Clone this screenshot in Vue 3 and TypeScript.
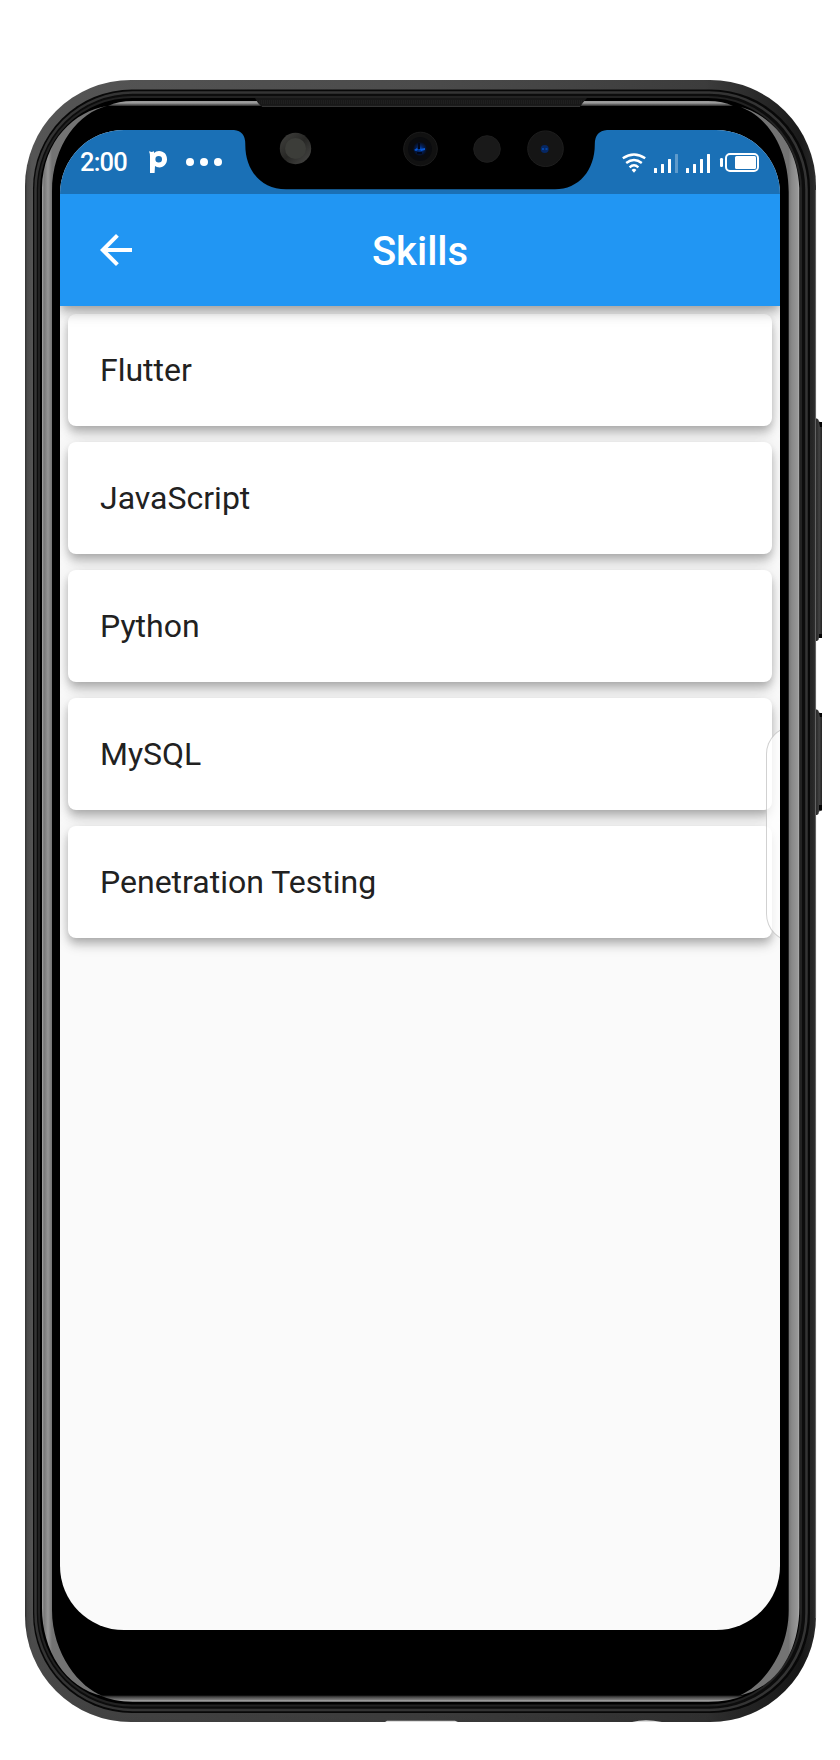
<script setup lang="ts">
interface Skill {
  id: number
  name: string
}

const skills: Skill[] = [
  { id: 1, name: 'Flutter' },
  { id: 2, name: 'JavaScript' },
  { id: 3, name: 'Python' },
  { id: 4, name: 'MySQL' },
  { id: 5, name: 'Penetration Testing' },
]
</script>

<template>
  <div class="stage">
    <svg class="body" width="840" height="1760" viewBox="0 0 840 1760" aria-hidden="true">
      <defs>
        <linearGradient id="shell" x1="25" x2="816" y1="0" y2="0" gradientUnits="userSpaceOnUse">
          <stop offset="0" stop-color="#333" />
          <stop offset="0.003" stop-color="#4b4b4b" />
          <stop offset="0.009" stop-color="#555" />
          <stop offset="0.5" stop-color="#4b4b4b" />
          <stop offset="0.86" stop-color="#3c3c3c" />
          <stop offset="0.98" stop-color="#1a1a1a" />
          <stop offset="0.996" stop-color="#272727" />
          <stop offset="1" stop-color="#333" />
        </linearGradient>
        <linearGradient id="shade" x1="0" x2="0" y1="80" y2="1722" gradientUnits="userSpaceOnUse">
          <stop offset="0.9" stop-color="#000" stop-opacity="0" />
          <stop offset="1" stop-color="#000" stop-opacity="0.22" />
        </linearGradient>
        <linearGradient id="glintL" x1="42" x2="52" y1="0" y2="0" gradientUnits="userSpaceOnUse">
          <stop offset="0" stop-color="#a8a8a8" />
          <stop offset="0.2" stop-color="#777" />
          <stop offset="0.6" stop-color="#969696" />
          <stop offset="1" stop-color="#737373" />
        </linearGradient>
        <linearGradient id="glintR" x1="788.5" x2="799.5" y1="0" y2="0" gradientUnits="userSpaceOnUse">
          <stop offset="0" stop-color="#737373" />
          <stop offset="0.3" stop-color="#888" />
          <stop offset="0.85" stop-color="#999" />
          <stop offset="1" stop-color="#bbb" />
        </linearGradient>
        <linearGradient id="edgeTop" x1="0" x2="0" y1="100" y2="107" gradientUnits="userSpaceOnUse">
          <stop offset="0" stop-color="#333" />
          <stop offset="0.25" stop-color="#aaa" />
          <stop offset="0.5" stop-color="#888" />
          <stop offset="0.75" stop-color="#444" />
          <stop offset="1" stop-color="#111" />
        </linearGradient>
        <linearGradient id="edgeBottom" x1="0" x2="0" y1="1695" y2="1702" gradientUnits="userSpaceOnUse">
          <stop offset="0" stop-color="#111" />
          <stop offset="0.4" stop-color="#555" />
          <stop offset="0.65" stop-color="#777" />
          <stop offset="0.85" stop-color="#aaa" />
          <stop offset="1" stop-color="#444" />
        </linearGradient>
        <linearGradient id="button" x1="815" x2="822" y1="0" y2="0" gradientUnits="userSpaceOnUse">
          <stop offset="0" stop-color="#191919" />
          <stop offset="0.6" stop-color="#444" />
          <stop offset="1" stop-color="#222" />
        </linearGradient>
      </defs>

      <path d="M815 418.500h2q2 1 2 3l3 1v214l-3 1q0 3-2 3.500h-2zM815 709.500h2q2 1 2 3l3 1v97l-3 1q0 3-2 3.500h-2z" fill="url(#button)" />
      <path d="M819 422h3v5h-2zM819 634h3v4h-3zM819 713h3v4h-2zM819 805h3v5h-3z" fill="#050505" />

      <rect x="25" y="80" width="791" height="1642" rx="106" fill="url(#shell)" />
      <rect x="25" y="80" width="791" height="1642" rx="106" fill="url(#shade)" />
      <rect x="33" y="89.5" width="777" height="1623.5" rx="99" fill="#080808" />
      <rect x="35.5" y="92.5" width="771" height="1617.5" rx="97" fill="#0c0c0c" stroke="#343434" stroke-width="2.5" />
      <rect x="39" y="97" width="762" height="1608.5" rx="93" fill="#000" stroke="#222" stroke-width="2" />
      <rect x="42" y="101" width="757" height="1601" rx="90" fill="#000" />

      <path d="M815.6 190V1618" stroke="#777" stroke-width="0.8" />
      <path d="M42 188C43 140 75 111 107 106C80 112 52 144 52 192V1610C52 1654 80 1688 103 1696C65 1688 42 1650 42 1608Z" fill="url(#glintL)" />
      <path d="M799.3 188C798 143 769 113 737 106C764 113 788.7 145 788.7 192V1610C788.7 1654 761 1688 738 1696C778 1688 799.3 1650 799.3 1608Z" fill="url(#glintR)" />
      <path d="M108 106Q118 101 133 101H708Q723 101 733 106Z" fill="url(#edgeTop)" />
      <path d="M100 1695.5H744Q729 1702 708 1702H133Q115 1702 100 1695.5Z" fill="url(#edgeBottom)" />
      <path d="M255 98H587L583 102.5L580 107H262L258 103Z" fill="#181818" />
      <path d="M262 106.4H580" stroke="#383838" />
      <path d="M257 101H584M259 103H582" stroke="#262626" stroke-dasharray="1 1" />
      <path d="M385 1722L387 1720.7H455L458 1722ZM632 1722Q645 1718.5 662 1722Z" fill="#ddd" />
    </svg>

    <main class="screen">
      <header class="status">
        <div class="status-left">
          <span class="clock">2:00</span>
          <svg class="parking" width="18" height="23" viewBox="0 0 18 23">
            <path fill="#fff" fill-rule="evenodd" d="M0 .2L2.8 1L5 .3V2Q7 0 10 0C15 0 18 3.6 18 8.2S14.8 16.4 10.5 16.4Q7.5 16.4 6 15L5.6 22H1V5.5Q1 2.4 0 .2ZM9.7 5A3.3 3.3 0 1 0 9.7 11.6A3.3 3.3 0 1 0 9.7 5Z" />
          </svg>
          <span class="dots"><i></i><i></i><i></i></span>
        </div>
        <svg class="indicators" width="138" height="22" viewBox="622 150 138 22">
          <g fill="none" stroke="#fff" stroke-width="2.4">
            <path d="M622.8 157.3Q634 149.8 645.2 157.3" />
            <path d="M626.2 162Q634 156 641.8 162" />
            <path d="M629.6 166.3Q634 162.2 638.4 166.3" />
          </g>
          <path d="M631.6 169Q634 166.7 636.4 169L634 171.8Z" fill="#fff" />
          <g fill="#fff">
            <rect x="654" y="167" width="3" height="5" rx=".6" />
            <rect x="661" y="163" width="3" height="9" rx=".6" />
            <rect x="668" y="158" width="3" height="14" rx=".6" />
            <rect x="675" y="153" width="3" height="19" rx=".6" opacity=".3" />
            <rect x="686" y="167" width="3" height="5" rx=".6" />
            <rect x="693" y="163" width="3" height="9" rx=".6" />
            <rect x="700" y="158" width="3" height="14" rx=".6" />
            <rect x="707" y="153" width="3" height="19" rx=".6" />
            <rect x="720" y="157" width="3" height="9" rx="1.2" />
            <rect x="735" y="155" width="21" height="13" rx="1.5" />
          </g>
          <rect x="726" y="153" width="32" height="17" rx="4" fill="none" stroke="#fff" stroke-width="2" />
        </svg>
      </header>

      <nav class="appbar">
        <svg class="back" width="48" height="48" viewBox="0 0 24 24">
          <path fill="#fff" d="M20 11H7.83l5.59-5.59L12 4l-8 8 8 8 1.41-1.41L7.83 13H20v-2z" />
        </svg>
        <h1>Skills</h1>
      </nav>

      <ul class="skills">
        <li v-for="skill in skills" :key="skill.id" class="card">{{ skill.name }}</li>
      </ul>

      <div class="edge-panel"></div>
    </main>

    <svg class="notch" width="373" height="60" viewBox="234 130 373 60" aria-hidden="true">
      <defs>
        <radialGradient id="lens">
          <stop offset="0" stop-color="#064ab8" />
          <stop offset=".45" stop-color="#03225f" />
          <stop offset="1" stop-color="#080b15" />
        </radialGradient>
        <linearGradient id="sensor" x1="0" y1="0" x2="1" y2="1">
          <stop offset="0" stop-color="#42423f" />
          <stop offset=".5" stop-color="#272725" />
          <stop offset="1" stop-color="#4a4a48" />
        </linearGradient>
      </defs>
      <path d="M234 129V130Q245.3 131 245.3 144C245 170 261 189.3 286 189.3H555C579 189.3 595 170 594.8 144Q594.8 131 607 130V129Z" />
      <circle cx="295.5" cy="148.5" r="15.7" fill="url(#sensor)" />
      <circle cx="295.5" cy="148.5" r="10.5" fill="#3c3d39" />
      <circle cx="420.5" cy="149" r="16.8" fill="#111" stroke="#1c1c1c" />
      <circle cx="420" cy="149" r="12" fill="#0a0b0e" />
      <circle cx="420" cy="149" r="7" fill="url(#lens)" />
      <path d="M414 150l3-2 1 2-2 1zM420 149l5-1v2l-4 1z" fill="#0759d8" />
      <path d="M419 143v6M417 153h5" stroke="#020718" stroke-width="2" />
      <circle cx="487" cy="149" r="13.3" fill="#191919" stroke="#1e1e1e" />
      <circle cx="545.5" cy="148.7" r="17.8" fill="#151515" stroke="#1e1e1e" />
      <circle cx="544.7" cy="149" r="4" fill="#062763" />
      <path d="M542 149h2m1.500 0h2" stroke="#0750b8" stroke-width="1.500" />
    </svg>
  </div>
</template>

<style>
body {
  margin: 0;
  background: #fff;
}
</style>

<style scoped>
.stage {
  position: relative;
  box-sizing: border-box;
  width: 840px;
  height: 1760px;
  padding: 130px 60px;
  overflow: hidden;
  background: #fff;
  font-family: Roboto, 'Liberation Sans', sans-serif;
}

.body {
  position: absolute;
  inset: 0;
}

.screen {
  position: relative;
  isolation: isolate;
  display: flex;
  flex-direction: column;
  height: 1500px;
  overflow: hidden;
  border-radius: 64px;
  background: #fafafa;
}

.status {
  position: relative;
  z-index: 2;
  display: flex;
  justify-content: space-between;
  flex: none;
  box-sizing: border-box;
  height: 64px;
  padding: 0 20px;
  background: #1a70b6;
  color: #fff;
}

.status-left {
  display: flex;
  align-items: center;
  height: 64px;
}

.clock {
  width: 69px;
  font-size: 25.500px;
  font-weight: 500;
  line-height: 66px;
  letter-spacing: -0.8px;
}

.dots {
  display: flex;
  gap: 6px;
  margin-left: 19px;
}

.dots i {
  width: 8px;
  height: 8px;
  border-radius: 50%;
  background: #fff;
}

.indicators {
  margin-top: 21px;
}

.appbar {
  position: relative;
  z-index: 1;
  display: grid;
  grid-template-columns: 48px 1fr 48px;
  align-items: center;
  flex: none;
  box-sizing: border-box;
  height: 112px;
  padding: 0 32px;
  background: #2196f3;
  box-shadow: 0 4px 8px -2px rgba(0, 0, 0, 0.2), 0 8px 10px rgba(0, 0, 0, 0.14), 0 2px 20px rgba(0, 0, 0, 0.12);
}

.appbar h1 {
  margin: 0;
  padding-top: 4px;
  color: #fff;
  font-size: 40px;
  font-weight: 500;
  line-height: 48px;
  text-align: center;
}

.skills {
  display: flex;
  flex-direction: column;
  gap: 16px;
  margin: 0;
  padding: 8px;
  list-style: none;
}

.card {
  height: 112px;
  padding-left: 32px;
  border-radius: 8px;
  background: #fff;
  box-shadow: 0 4px 8px -2px rgba(0, 0, 0, 0.2), 0 8px 10px rgba(0, 0, 0, 0.14), 0 2px 20px rgba(0, 0, 0, 0.1);
  color: #212121;
  font-size: 32px;
  line-height: 112px;
}

.edge-panel {
  position: absolute;
  top: 596px;
  left: 706px;
  width: 64px;
  height: 216px;
  box-sizing: border-box;
  border: 1px solid rgba(0, 0, 0, 0.18);
  border-radius: 28px;
  background: rgba(255, 255, 255, 0.75);
}

.notch {
  position: absolute;
  top: 130px;
  left: 234px;
}
</style>
